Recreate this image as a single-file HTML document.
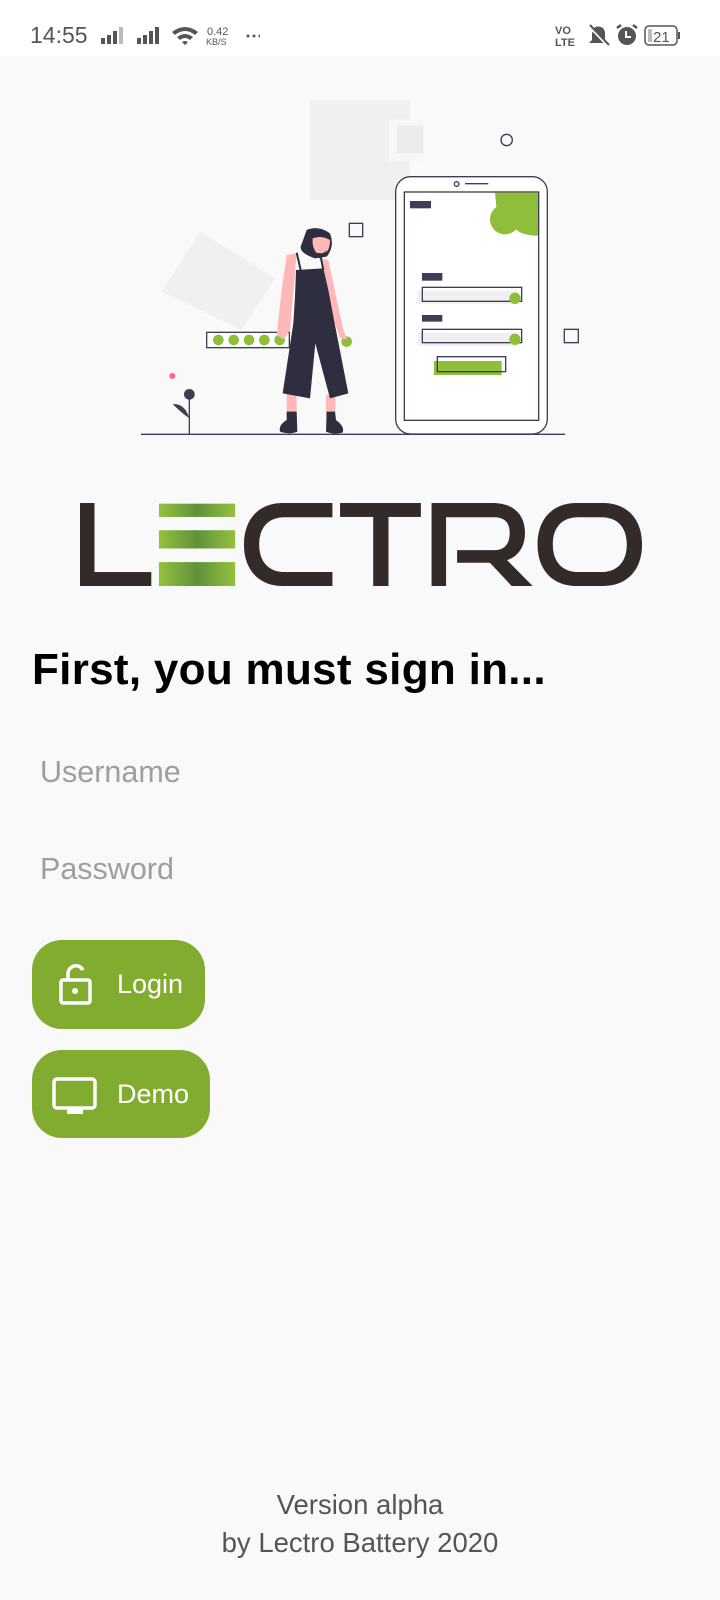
<!DOCTYPE html>
<html><head><meta charset="utf-8"><style>
*{margin:0;padding:0;box-sizing:border-box}
body{width:720px;height:1600px;background:#f9f9f9;font-family:"Liberation Sans",Roboto,sans-serif;position:relative;overflow:hidden}
.sb{position:absolute;left:0;top:0;width:720px;height:56px;background:#fff}
.a{position:absolute;white-space:nowrap}
.btn{position:absolute;left:32px;background:#82ac30;border-radius:30px;color:#fff;font-size:27px}
</style></head><body>
<div class="sb">
<div class="a" style="left:30px;top:22px;font-size:23px;color:#555">14:55</div>
<svg class="a" style="left:100px;top:26px" width="160" height="24">
<g fill="#555"><rect x="1" y="12" width="4" height="6"/><rect x="7" y="9" width="4" height="9"/><rect x="13" y="5" width="4" height="13"/><rect x="19" y="1" width="4" height="17" fill="#bbb"/>
<rect x="37" y="12" width="4" height="6"/><rect x="43" y="9" width="4" height="9"/><rect x="49" y="5" width="4" height="13"/><rect x="55" y="1" width="4" height="17"/>
<path d="M72 6 Q85 -4 98 6 L95 9 Q85 1 75 9Z M77 11 Q85 5 93 11 L90 14 Q85 10 80 14Z M82 16 L85 19 L88 16 Q85 14 82 16Z"/>
<text x="107" y="9" font-size="11" font-family="Liberation Sans">0.42</text><text x="106" y="19" font-size="9" font-family="Liberation Sans">KB/S</text>
<circle cx="148" cy="10" r="1.5"/><circle cx="154" cy="10" r="1.5"/><circle cx="160" cy="10" r="1.5"/></g></svg>
<svg class="a" style="left:555px;top:22px" width="140" height="30">
<g fill="#555"><text x="0" y="12" font-size="11" font-weight="bold" font-family="Liberation Sans">VO</text><text x="0" y="24" font-size="11" font-weight="bold" font-family="Liberation Sans">LTE</text>
<path d="M40 5 Q48 3 50 10 V18 L53 21 H34 L37 18 V11Z"/><line x1="34" y1="4" x2="54" y2="25" stroke="#fff" stroke-width="2.5"/><line x1="35" y1="3" x2="54" y2="23" stroke="#555" stroke-width="2"/>
<circle cx="72" cy="14" r="9"/><path d="M71 9 V15 H76" stroke="#fff" stroke-width="2" fill="none"/><path d="M62 6 L66 3 M82 6 L78 3" stroke="#555" stroke-width="2.5"/>
<rect x="90" y="4" width="32" height="19" rx="4" fill="none" stroke="#555" stroke-width="1.5"/><rect x="93" y="7" width="4" height="13" fill="#bbb"/><rect x="123" y="10" width="2" height="7"/>
<text x="98" y="20" font-size="15" font-family="Liberation Sans">21</text></g></svg>
</div>

<svg class="a" style="left:0;top:0" width="720" height="620">
<g transform="translate(130,90) scale(0.33333)">
<rect x="540" y="30" width="300" height="300" fill="#f0f0f0"/>
<rect x="777" y="88" width="103" height="127" fill="#f7f7f7"/>
<rect x="800" y="108" width="80" height="82" fill="#ececec"/>
<polygon points="210,425 435,565 335,720 95,605" fill="#f0f0f0"/>
<circle cx="1130" cy="150" r="17" fill="none" stroke="#3f3d56" stroke-width="4"/>
<rect x="658" y="400" width="40" height="40" fill="none" stroke="#3f3d56" stroke-width="4"/>
<rect x="1303" y="718" width="42" height="40" fill="none" stroke="#3f3d56" stroke-width="4"/>
<line x1="33" y1="1033" x2="1305" y2="1033" stroke="#3f3d56" stroke-width="4"/>
<rect x="797" y="260" width="455" height="772" rx="45" fill="#fff" stroke="#3f3d56" stroke-width="4"/>
<rect x="823" y="306" width="403" height="685" fill="#fff" stroke="#3f3d56" stroke-width="4"/>
<circle cx="980" cy="282" r="7" fill="none" stroke="#3f3d56" stroke-width="4"/>
<line x1="1005" y1="281" x2="1075" y2="281" stroke="#3f3d56" stroke-width="4"/>
<path d="M1095 308 H1224 V437 Q1180 437 1160 420 Q1140 380 1100 360 Z" fill="#8fbf3a"/>
<circle cx="1125" cy="388" r="45" fill="#8fbf3a"/>
<rect x="840" y="333" width="63" height="22" fill="#3f3d56"/>
<rect x="876" y="549" width="61" height="23" fill="#3f3d56"/>
<rect x="876" y="675" width="61" height="20" fill="#3f3d56"/>
<rect x="862" y="602" width="300" height="40" fill="#f0f0f0"/>
<rect x="877" y="592" width="298" height="42" fill="none" stroke="#3f3d56" stroke-width="4"/>
<circle cx="1155" cy="625" r="17" fill="#8fbf3a"/>
<rect x="862" y="728" width="300" height="40" fill="#f0f0f0"/>
<rect x="877" y="718" width="298" height="40" fill="none" stroke="#3f3d56" stroke-width="4"/>
<circle cx="1155" cy="748" r="17" fill="#8fbf3a"/>
<rect x="912" y="813" width="203" height="42" fill="#8fbf3a"/>
<rect x="922" y="800" width="205" height="45" fill="none" stroke="#3f3d56" stroke-width="4"/>
<rect x="230" y="727" width="248" height="46" fill="#fff" stroke="#3f3d56" stroke-width="4"/>
<g fill="#8fbf3a"><circle cx="265" cy="750" r="16"/><circle cx="311" cy="750" r="16"/><circle cx="357" cy="750" r="16"/><circle cx="403" cy="750" r="16"/><circle cx="449" cy="750" r="16"/><circle cx="650" cy="755" r="16"/></g>
<line x1="178" y1="915" x2="178" y2="1033" stroke="#3f3d56" stroke-width="4"/>
<circle cx="178" cy="913" r="16" fill="#3f3d56"/>
<path d="M128 942 Q165 940 178 985 Q150 965 128 942Z" fill="#3f3d56"/>
<circle cx="127" cy="858" r="9" fill="#ff6584"/>
<path d="M470 495 L500 490 L480 720 L462 748 L440 735 L455 600Z" fill="#ffb8b8"/>
<path d="M572 505 L595 510 L640 720 L652 748 L630 745 L588 620Z" fill="#ffb8b8"/>
<rect x="470" y="905" width="30" height="75" fill="#ffb8b8"/><rect x="588" y="915" width="28" height="65" fill="#ffb8b8"/>
<path d="M530 420 Q565 405 600 430 Q615 470 590 500 L555 505 Q510 490 512 470Z" fill="#2f2e41"/>
<path d="M548 445 Q575 435 600 450 Q600 480 585 490 L560 490 Q545 470 548 445Z" fill="#ffb8b8"/>
<path d="M560 488 Q580 495 590 480 Q585 505 568 505Z" fill="#2f2e41"/>
<path d="M498 540 L580 535 L595 600 L612 690 L655 910 L600 925 L556 760 L540 925 L458 910 L490 700 L495 620Z" fill="#2f2e41"/>
<path d="M500 488 L512 540 M572 500 L580 540" stroke="#2f2e41" stroke-width="6"/>
<path d="M470 965 L500 965 L502 1025 Q480 1035 450 1025 Q445 1005 470 990Z" fill="#2f2e41"/>
<path d="M590 965 L615 965 L618 990 Q645 1010 638 1028 Q610 1035 588 1025Z" fill="#2f2e41"/>
</g>
<defs><linearGradient id="g" x1="0" x2="1"><stop offset="0" stop-color="#94c13c"/><stop offset="0.5" stop-color="#5f913b"/><stop offset="1" stop-color="#94c13c"/></linearGradient></defs>
<g transform="translate(80,503) scale(0.3813,0.332) translate(-48,-70)" fill="#332b2a">
<rect x="48" y="70" width="38" height="250"/><rect x="48" y="278" width="187" height="42"/>
<rect x="255" y="72" width="200" height="40" fill="url(#g)"/><rect x="255" y="152" width="200" height="55" fill="url(#g)"/><rect x="255" y="248" width="200" height="72" fill="url(#g)"/>
<path d="M710 70 H580 C520 70 478 115 478 195 C478 275 520 320 580 320 H710 V278 H585 C545 278 518 250 518 195 C518 140 545 113 585 113 H710Z"/>
<rect x="730" y="70" width="212" height="42"/><rect x="817" y="70" width="40" height="250"/>
<path d="M970 70 H1130 C1185 70 1215 105 1215 160 C1215 205 1195 232 1168 242 L1235 320 H1180 L1123 250 H1037 V212 H1135 C1160 212 1175 195 1175 160 C1175 128 1160 113 1135 113 H1008 V320 H970Z"/>
<path fill-rule="evenodd" d="M1350 70 H1420 C1480 70 1522 115 1522 195 C1522 275 1480 320 1420 320 H1350 C1290 320 1248 275 1248 195 C1248 115 1290 70 1350 70Z M1355 113 C1315 113 1288 140 1288 195 C1288 250 1315 278 1355 278 H1415 C1455 278 1482 250 1482 195 C1482 140 1455 113 1415 113Z"/>
</g>
</svg>

<div class="a" style="left:32px;top:645px;font-size:44px;font-weight:bold;color:#000;letter-spacing:0.3px">First, you must sign in...</div>
<div class="a" style="left:40px;top:755px;font-size:30.5px;color:#9e9e9e">Username</div>
<div class="a" style="left:40px;top:852px;font-size:30.5px;color:#9e9e9e">Password</div>

<div class="btn" style="top:940px;width:173px;height:89px">
<svg class="a" style="left:26px;top:22px" width="36" height="44"><path d="M10 18 V11 A8 8 0 0 1 25 8" fill="none" stroke="#fff" stroke-width="3.5"/><rect x="3" y="18" width="29" height="23" rx="2" fill="none" stroke="#fff" stroke-width="3.5"/><circle cx="17" cy="29" r="3" fill="#fff"/></svg>
<div class="a" style="left:85px;top:29px">Login</div></div>
<div class="btn" style="top:1050px;width:178px;height:88px">
<svg class="a" style="left:20px;top:27px" width="46" height="40"><rect x="2" y="2" width="41" height="29" rx="3" fill="none" stroke="#fff" stroke-width="3.5"/><rect x="15" y="32" width="16" height="5" fill="#fff"/></svg>
<div class="a" style="left:85px;top:29px">Demo</div></div>

<div class="a" style="left:0;width:720px;text-align:center;top:1486px;font-size:27.5px;color:#555;line-height:38px">Version alpha<br>by Lectro Battery 2020</div>
</body></html>
